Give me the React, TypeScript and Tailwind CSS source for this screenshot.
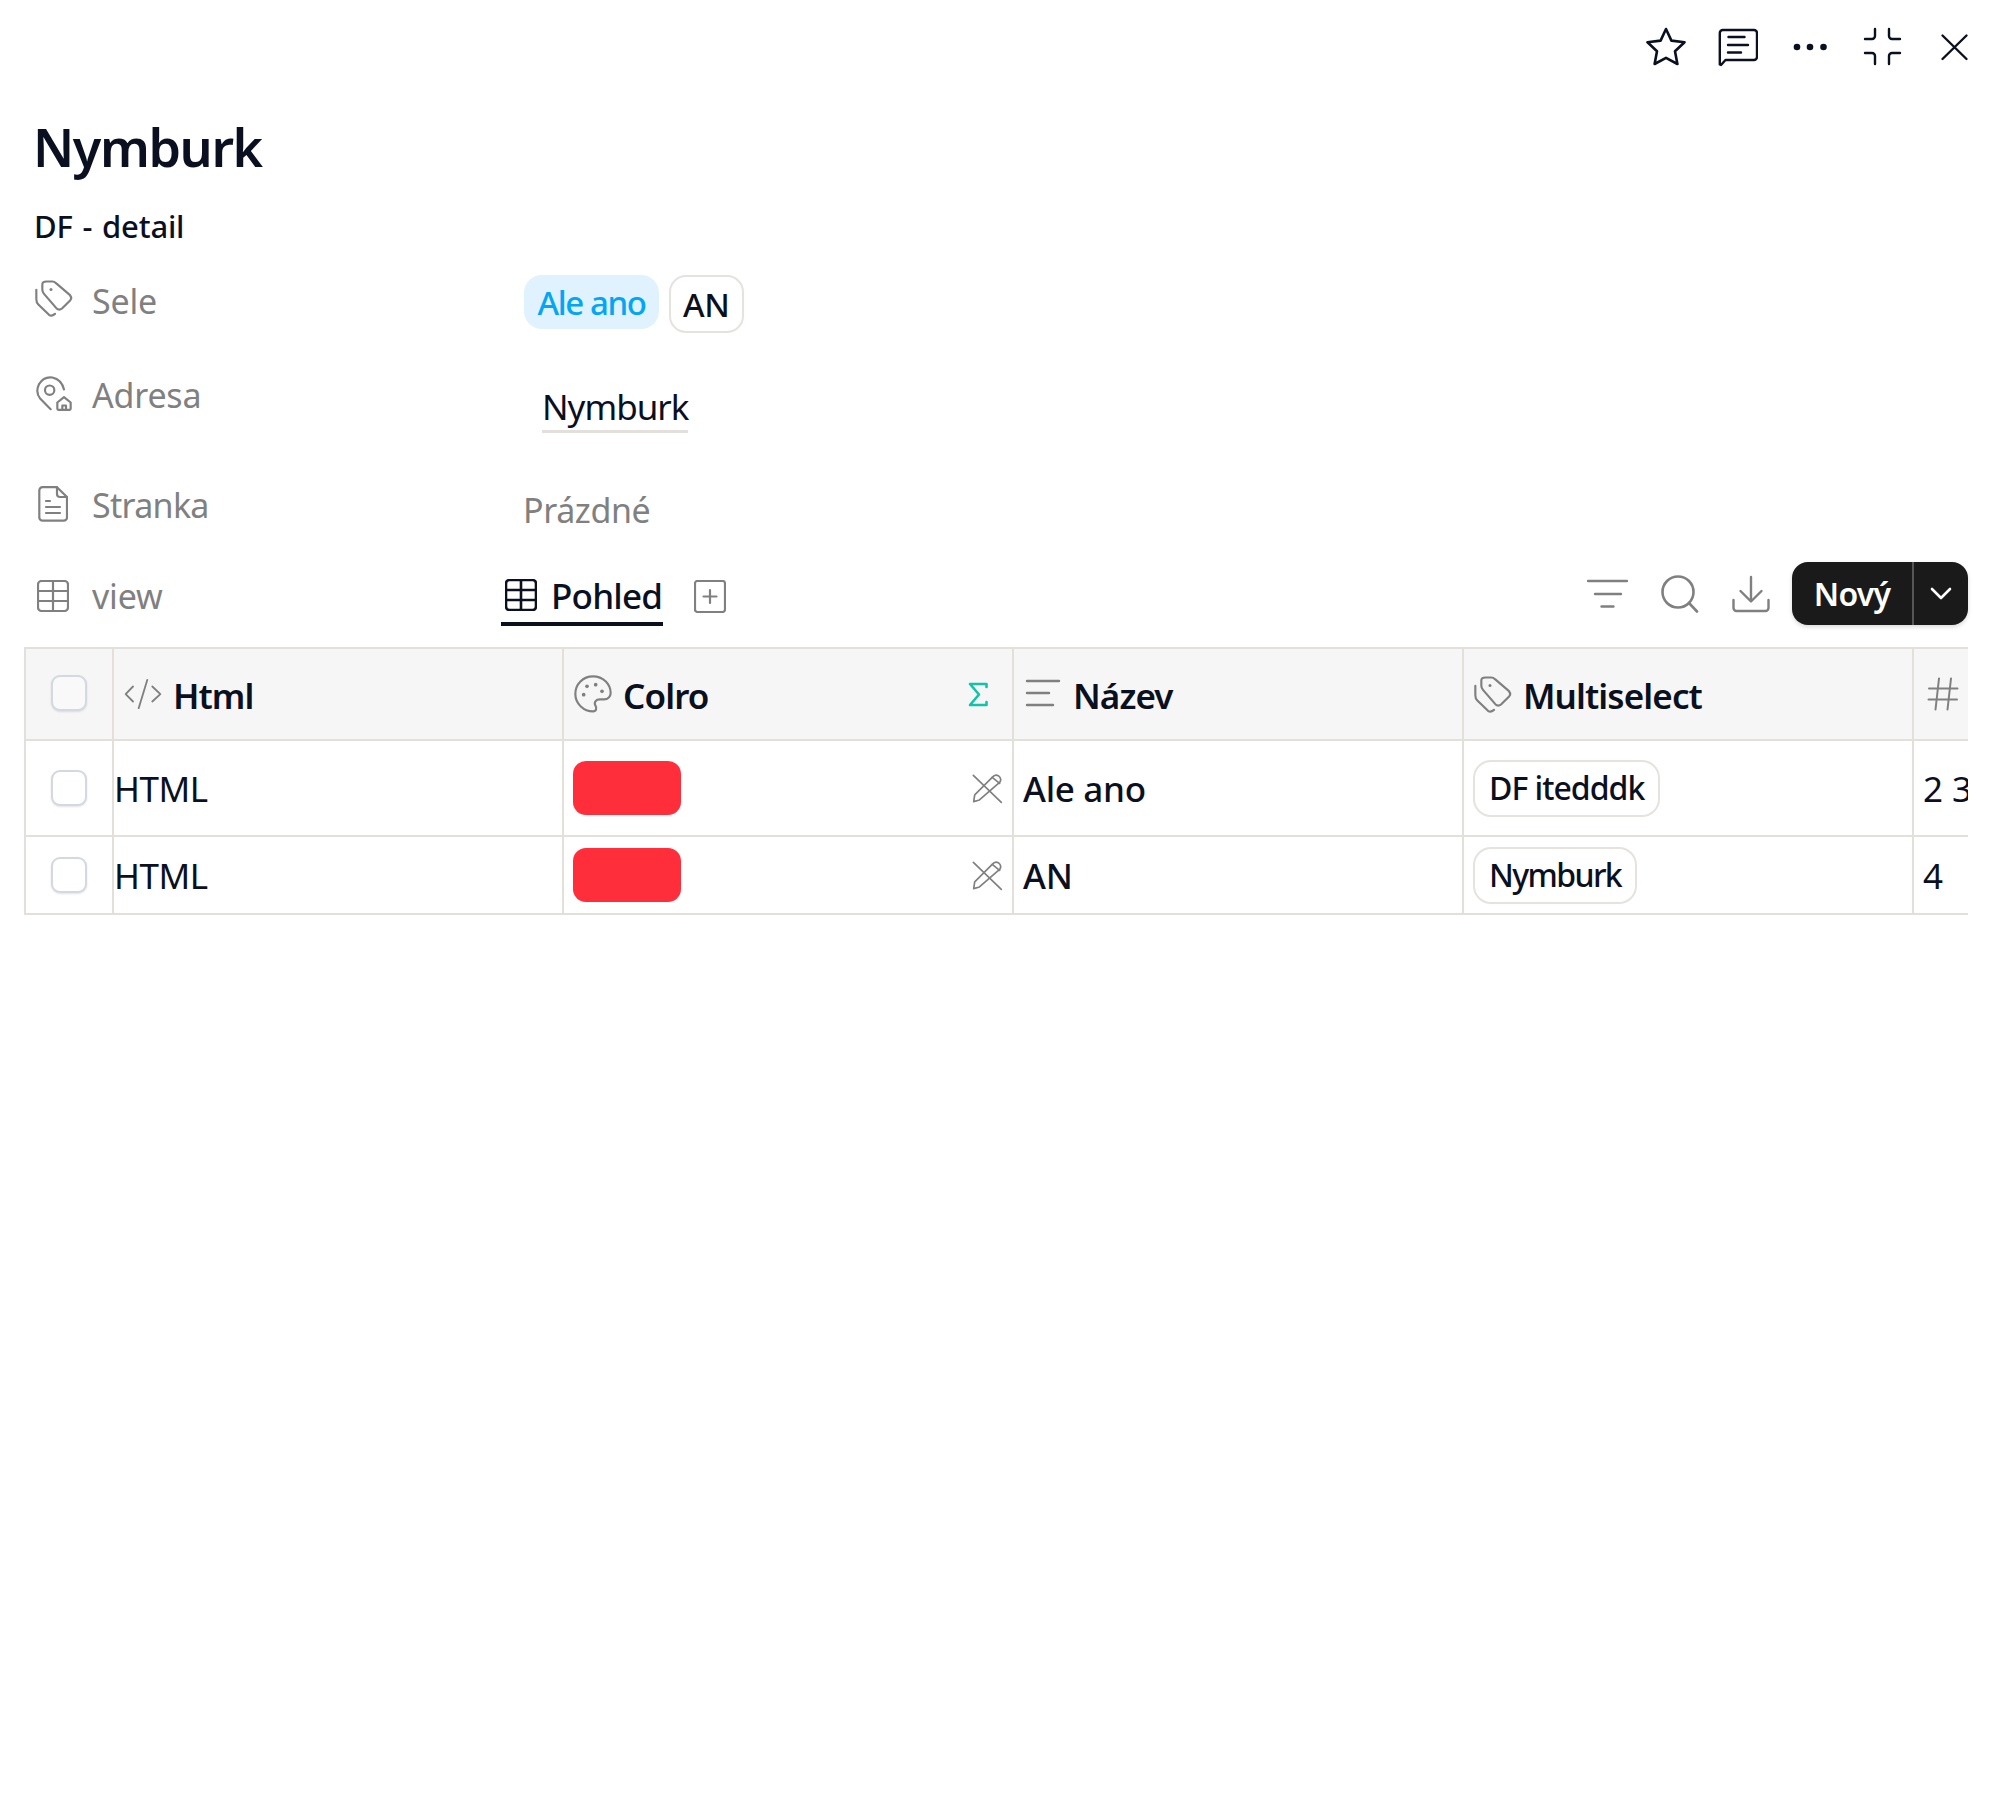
import React from "react";

const G = "#808080";
const D = "#0b1020";

const IconStar = () => (
  <svg width="40" height="40" viewBox="0 0 40 40" fill="none" stroke={D} strokeWidth="2.6" strokeLinejoin="round" strokeLinecap="round">
    <path d="M20 2 L25.4 13.6 L38.5 15.2 L29 24.2 L31.4 37 L20 30.8 L8.6 37 L11 24.2 L1.5 15.2 L14.6 13.6 Z" />
  </svg>
);
const IconChat = () => (
  <svg width="40" height="40" viewBox="0 0 40 40" fill="none" stroke={D} strokeWidth="2.4" strokeLinejoin="round" strokeLinecap="round">
    <path d="M1.8 37.5 V6 a3 3 0 0 1 3-3 H36 a3 3 0 0 1 3 3 V30 a3 3 0 0 1-3 3 H7.5 L3 38 Z" />
    <path d="M10.5 10 H26.5 M10 18 H30 M10 25.5 H23" />
  </svg>
);
const IconDots = () => (
  <svg width="40" height="40" viewBox="0 0 40 40" fill={D}>
    <circle cx="7" cy="20" r="3.3" />
    <circle cx="20" cy="20" r="3.3" />
    <circle cx="33.5" cy="20" r="3.3" />
  </svg>
);
const IconCompress = () => (
  <svg width="40" height="40" viewBox="0 0 40 40" fill="none" stroke={D} strokeWidth="2.4" strokeLinecap="round">
    <path d="M13 2 V9 a3 3 0 0 1-3 3 H3" />
    <path d="M27 2 V9 a3 3 0 0 0 3 3 H38" />
    <path d="M13 37 V29 a3 3 0 0 0-3-3 H3" />
    <path d="M27 37 V29 a3 3 0 0 1 3-3 H38" />
  </svg>
);
const IconClose = () => (
  <svg width="40" height="40" viewBox="0 0 40 40" fill="none" stroke={D} strokeWidth="2.4" strokeLinecap="round">
    <path d="M8.5 8.5 L32.5 32 M32.5 8.5 L8.5 32" />
  </svg>
);
const IconTag = () => (
  <svg width="40" height="42" viewBox="25 20 120 125" fill="none" stroke={G} strokeWidth="6.5" strokeLinecap="round" strokeLinejoin="round" className="shrink-0">
    <path d="M62 33 H80 Q86 33 91 38 L133 74 Q140 82 134 89 L109 114 Q100 121 92 113 L55 70 Q50 64 50 58 V42 Q50 33 62 33 Z" />
    <circle cx="76" cy="57" r="4.5" fill={G} stroke="none" />
    <path d="M32 58 V86 Q32 96 38 102 L70 133 Q78 139 88 130" />
  </svg>
);
const IconPin = () => (
  <svg width="40" height="37" viewBox="25 315 120 110" fill="none" stroke={G} strokeWidth="6.5" strokeLinecap="round" strokeLinejoin="round" className="shrink-0">
    <path d="M75 417 L44 386 Q28 366 40 342 Q55 318 80 322 Q108 328 115 358" />
    <circle cx="72" cy="360" r="14" />
    <path d="M95 397 L115 381 L135 397 V416 Q135 419 132 419 H98 Q95 419 95 416 Z" />
    <path d="M110 419 V406 H121 V419" />
  </svg>
);
const IconDoc = () => (
  <svg width="30" height="36" viewBox="0 0 30 36" fill="none" stroke={G} strokeWidth="2.2" strokeLinecap="round" strokeLinejoin="round" className="shrink-0">
    <path d="M4.5 1.2 H19 L29 11 V31.5 a3.2 3.2 0 0 1-3.2 3.2 H4.5 a3.2 3.2 0 0 1-3.2-3.2 V4.4 a3.2 3.2 0 0 1 3.2-3.2 Z" />
    <path d="M19 1.2 V8 a3 3 0 0 0 3 3 H29" />
    <path d="M8 15 H12 M8 21 H22 M8 27 H22" />
  </svg>
);
const IconGrid = ({ color, sw }: { color: string; sw: number }) => (
  <svg width="32" height="32" viewBox="0 0 32 32" fill="none" stroke={color} strokeWidth={sw} className="shrink-0">
    <rect x="1" y="1" width="30" height="30" rx="3.5" />
    <path d="M16 1 V31 M1 11 H31 M1 21 H31" />
  </svg>
);
const IconPlus = () => (
  <svg width="32" height="33" viewBox="0 0 32 33" fill="none" stroke={G} strokeWidth="2.2" strokeLinecap="round">
    <rect x="1" y="1" width="30" height="31" rx="2.5" />
    <path d="M16 10 V23 M9.5 16.5 H22.5" />
  </svg>
);
const IconFilter = () => (
  <svg width="41" height="29" viewBox="0 0 41 29" fill="none" stroke={G} strokeWidth="2.4" strokeLinecap="round">
    <path d="M1 2 H40 M8 15 H34 M14.5 27.5 H26.5" />
  </svg>
);
const IconSearch = () => (
  <svg width="38" height="38" viewBox="0 0 38 38" fill="none" stroke={G} strokeWidth="2.6" strokeLinecap="round">
    <circle cx="17" cy="17" r="15.5" />
    <path d="M28 28 L36 36.5" />
  </svg>
);
const IconDownload = () => (
  <svg width="38" height="38" viewBox="0 0 38 38" fill="none" stroke={G} strokeWidth="2.4" strokeLinecap="round" strokeLinejoin="round">
    <path d="M19 2 V26 M8.5 16 L19 26.5 L29.5 16" />
    <path d="M1.5 25 V33 a3 3 0 0 0 3 3 H33.5 a3 3 0 0 0 3-3 V25" />
  </svg>
);
const IconCode = () => (
  <svg width="40" height="32" viewBox="25 40 120 95" fill="none" stroke={G} strokeWidth="5.5" strokeLinecap="round" strokeLinejoin="round" className="shrink-0">
    <path d="M55 65 L33 88 L55 110 M98 45 L72 130 M113 65 L137 88 L113 110" />
  </svg>
);
const IconPalette = () => (
  <svg width="40" height="40" viewBox="25 28 120 120" fill="none" stroke={G} strokeWidth="6.5" className="shrink-0">
    <path d="M85 35 C55 35 32 58 32 88 C32 118 58 140 85 140 C95 140 97 130 92 122 C87 112 95 104 105 104 H118 C130 104 138 95 138 85 C138 58 115 35 85 35 Z" />
    <g fill={G} stroke="none">
      <circle cx="67" cy="65" r="5.5" />
      <circle cx="93" cy="60" r="5.5" />
      <circle cx="112" cy="80" r="5.5" />
      <circle cx="57" cy="90" r="5.5" />
    </g>
  </svg>
);
const IconSigma = () => (
  <svg width="20" height="25" viewBox="0 0 20 25" fill="none" stroke="#12c2a9" strokeWidth="2.6" strokeLinecap="round" strokeLinejoin="round">
    <path d="M18.5 5 V2 H2 L11 12.5 L2 23 H18.5 V20" />
  </svg>
);
const IconPencilOff = () => (
  <svg width="32" height="31" viewBox="35 305 95 92" fill="none" stroke={G} strokeWidth="5" strokeLinecap="round" strokeLinejoin="round">
    <path d="M42 312 L125 392" />
    <path d="M43 390 L60 385 L120 333 Q128 322 116 313 Q106 308 98 318 L46 370 Z" />
    <path d="M98 318 L120 336" />
  </svg>
);
const IconLines = () => (
  <svg width="40" height="30" viewBox="0 0 40 30" fill="none" stroke={G} strokeWidth="2.4" strokeLinecap="round" className="shrink-0">
    <path d="M4 2 H36 M4 14 H26 M4 26 H30" />
  </svg>
);
const IconHash = () => (
  <svg width="32" height="34" viewBox="0 0 32 34" fill="none" stroke={G} strokeWidth="2" strokeLinecap="round">
    <path d="M12 1.5 L8.5 32.5 M24 1.5 L20.5 32.5 M2 11.5 H30.5 M1.5 22.5 H30" />
  </svg>
);

const Check = ({ head }: { head?: boolean }) => (
  <span
    className={`block h-[36px] w-[36px] rounded-[9px] border-2 border-[#d3d8e3] shadow-[0_1px_2px_rgba(16,24,40,0.12)] ${
      head ? "bg-[#f9f9f9]" : "bg-white"
    }`}
  />
);

const Pill = ({ children, narrow }: { children: React.ReactNode; narrow?: boolean }) => (
  <span
    className={`flex h-[57px] items-center rounded-[18px] border-2 border-[#e6e3df] bg-white px-[14px] text-[32px] font-medium leading-none text-[#0b1020] ${
      narrow ? "tracking-[-1.6px]" : "tracking-[-1px]"
    }`}
  >
    {children}
  </span>
);

const Swatch = () => <span className="block h-[54px] w-[108px] rounded-[13px] bg-[#ff2e3a]" />;

const Head = ({ icon, label, end }: { icon: React.ReactNode; label: string; end?: React.ReactNode }) => (
  <div className="flex h-full w-[450px] shrink-0 items-center gap-[10px] border-l-2 border-[#e3e0dc] pl-[9px] pr-[24px]">
    <span className="flex w-[40px] justify-center">{icon}</span>
    <span className="pt-[2px] text-[35px] font-semibold leading-none tracking-[-0.9px] text-[#0b1020]">{label}</span>
    {end && <span className="ml-auto flex">{end}</span>}
  </div>
);

const Cell = ({ children, end, pad = "pl-0" }: { children: React.ReactNode; end?: React.ReactNode; pad?: string }) => (
  <div className={`flex h-full w-[450px] shrink-0 items-center border-l-2 border-[#e3e0dc] ${pad} pr-[9px]`}>
    {children}
    {end && <span className="ml-auto flex">{end}</span>}
  </div>
);

const Row = ({ h, name, tag, num, narrow }: { h: string; name: string; tag: string; num: string; narrow?: boolean }) => (
  <div className={`flex ${h} border-b-2 border-[#e3e0dc]`}>
    <div className="flex h-full w-[88px] shrink-0 items-center justify-center border-l-2 border-[#e3e0dc]">
      <Check />
    </div>
    <Cell>
      <span className="text-[35px] leading-none tracking-[-0.5px] text-[#0b1020]">HTML</span>
    </Cell>
    <Cell pad="pl-[9px]" end={<IconPencilOff />}>
      <Swatch />
    </Cell>
    <Cell pad="pl-[9px]">
      <span className="text-[35px] font-medium leading-none tracking-[-0.3px] text-[#0b1020]">{name}</span>
    </Cell>
    <Cell pad="pl-[9px]">
      <Pill narrow={narrow}>{tag}</Pill>
    </Cell>
    <div className="flex h-full w-[450px] shrink-0 items-center border-l-2 border-[#e3e0dc] pl-[9px] text-[35px] leading-none text-[#0b1020]">
      {num}
    </div>
  </div>
);

const label = "text-[34px] leading-none tracking-[-0.2px]";

export default function App() {
  return (
    <div className="min-h-screen w-full overflow-hidden bg-white font-['Noto_Sans',sans-serif] text-[#0b1020]">
      {/* top actions */}
      <div className="flex justify-end gap-[32px] pr-[23px] pt-[27px]">
        <IconStar />
        <IconChat />
        <IconDots />
        <IconCompress />
        <IconClose />
      </div>

      <div className="pl-[34px]">
        <h1 className="-ml-[1px] mt-[45px] h-[70px] text-[52px] font-semibold leading-[70px] tracking-[-1.4px]">Nymburk</h1>
        <div className="mt-[24px] h-[40px] text-[31px] font-medium leading-[40px] tracking-[-0.2px] [word-spacing:2px]">DF - detail</div>

        {/* properties */}
        <div className="mt-[25px] flex h-[96px] items-start">
          <div className="flex w-[490px] items-center gap-[18px] pt-[6px] text-[#808080]">
            <IconTag />
            <span className={`pt-[5px] ${label}`}>Sele</span>
          </div>
          <div className="flex items-start gap-[10px] pt-[4px]">
            <span className="flex h-[54px] items-center rounded-[18px] bg-[#e0f2fe] px-[13.5px] text-[33px] font-medium leading-none tracking-[-1.4px] text-[#02a6f5]">
              Ale ano
            </span>
            <span className="flex h-[58px] items-center rounded-[17px] border-2 border-[#e6e3df] px-[12px] text-[33px] font-medium leading-none tracking-[-0.3px]">
              AN
            </span>
          </div>
        </div>

        <div className="flex h-[119px] items-start">
          <div className="flex w-[490px] items-center gap-[18px] pt-[8px] text-[#808080]">
            <IconPin />
            <span className={`pt-[2px] ${label}`}>Adresa</span>
          </div>
          <div className="ml-[18px] mt-[17px] border-b-[3px] border-[#e3e0dc] text-[35px] leading-[46px] tracking-[-1px]">
            Nymburk
          </div>
        </div>

        <div className="flex h-[92px] items-start">
          <div className="flex w-[490px] items-center pl-[4px] text-[#808080]">
            <IconDoc />
            <span className="ml-[24px] pt-[2px] text-[34px] leading-none tracking-[-0.7px]">Stranka</span>
          </div>
          <div className="-ml-[1px] pt-[7px] text-[34px] leading-none tracking-[-0.4px] text-[#808080]">Prázdné</div>
        </div>

        {/* view toolbar */}
        <div className="flex h-[48px] items-start pr-[29px]">
          <div className="flex w-[467px] items-center pl-[3px] pt-[1px] text-[#808080]">
            <IconGrid color={G} sw={2.2} />
            <span className={`ml-[23px] ${label}`}>view</span>
          </div>
          <div className="flex h-[48px] w-[162px] items-start gap-[14px] border-b-[4px] border-[#0b1020] pl-[4px] pt-[1px]">
            <IconGrid color={D} sw={2.6} />
            <span className="text-[35px] font-medium leading-[34px] tracking-[-0.8px]">Pohled</span>
          </div>
          <div className="ml-[31px] pt-[2px]">
            <IconPlus />
          </div>
          <div className="-mt-[16px] ml-auto flex items-center">
            <div className="flex items-center gap-[33px] pr-[22px]">
              <IconFilter />
              <IconSearch />
              <IconDownload />
            </div>
            <div className="flex h-[63px] w-[176px] items-stretch overflow-hidden rounded-[16px] bg-[#1a1a1a] text-white shadow-[0_2px_4px_rgba(0,0,0,0.15)]">
              <span className="flex w-[120px] items-center justify-center text-[32px] font-semibold leading-none tracking-[-0.8px]">Nový</span>
              <span className="flex flex-1 items-center justify-center border-l-2 border-[#555555]">
                <svg width="22" height="14" viewBox="0 0 22 14" fill="none" stroke="#ffffff" strokeWidth="2.6" strokeLinecap="round" strokeLinejoin="round">
                  <path d="M2 2 L11 11 L20 2" />
                </svg>
              </span>
            </div>
          </div>
        </div>
      </div>

      {/* table */}
      <div className="ml-[24px] mr-[29px] mt-[21px] overflow-hidden">
        <div className="flex h-[94px] border-y-2 border-[#e3e0dc] bg-[#f6f6f6]">
          <div className="flex h-full w-[88px] shrink-0 items-center justify-center border-l-2 border-[#e3e0dc] pb-[2px]">
            <Check head />
          </div>
          <Head icon={<IconCode />} label="Html" />
          <Head icon={<IconPalette />} label="Colro" end={<IconSigma />} />
          <Head icon={<IconLines />} label="Název" />
          <Head icon={<IconTag />} label="Multiselect" />
          <div className="flex h-full w-[450px] shrink-0 items-center border-l-2 border-[#e3e0dc] pl-[13px]">
            <IconHash />
          </div>
        </div>
        <Row h="h-[96px]" name="Ale ano" tag="DF itedddk" num="2 3" />
        <Row h="h-[78px]" name="AN" tag="Nymburk" num="4" narrow />
      </div>
    </div>
  );
}
